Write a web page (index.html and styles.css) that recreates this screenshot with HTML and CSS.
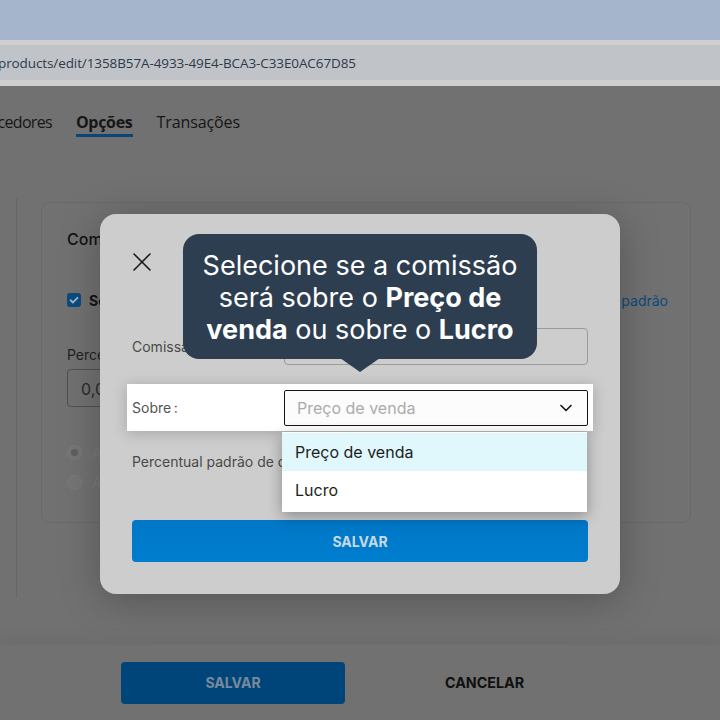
FILE: index.html
```html
<!DOCTYPE html>
<html lang="pt-BR">
<head>
<meta charset="utf-8">
<title>Opções</title>
<link rel="stylesheet" href="styles.css">
</head>
<body>
<div class="chrome-top"></div>
<div class="urlbar"><span class="url">products/edit/1358B57A-4933-49E4-BCA3-C33E0AC67D85</span></div>
<div class="page">
  <nav class="tabs">
    <span class="tab first">Fornecedores</span>
    <span class="tab active">Opções</span>
    <span class="tab">Transações</span>
  </nav>
  <div class="content">
    <div class="card">
      <div class="card-title">Comissão</div>
      <div class="check-row">
        <span class="checkbox"><svg viewBox="0 0 14 14" width="14" height="14"><path d="M3.5 7.2l2.3 2.3 4.7-4.7" fill="none" stroke="#9fb4c6" stroke-width="1.8" stroke-linecap="round" stroke-linejoin="round"/></svg></span>
        <span class="check-label">Sempre usar comissão</span>
        <span class="link">padrão</span>
      </div>
      <div class="field-label">Percentual</div>
      <div class="bg-input">0,00</div>
      <div class="radio-row first"><span class="radio checked"></span><span class="radio-label">A</span></div>
      <div class="radio-row"><span class="radio"></span><span class="radio-label">A</span></div>
    </div>
  </div>
  <footer class="footer">
    <button class="btn-footer-save">SALVAR</button>
    <button class="btn-footer-cancel">CANCELAR</button>
  </footer>

  <div class="modal">
    <svg class="close" viewBox="0 0 18 18" width="18" height="18"><path d="M1 1l16 16M17 1L1 17" stroke="#1a1a1a" stroke-width="1.6" stroke-linecap="round"/></svg>
    <div class="form-row row-commission">
      <span class="form-label">Comissão:</span>
      <div class="form-input"></div>
    </div>
    <div class="form-row row-highlight">
      <span class="form-label">Sobre&#8239;:</span>
      <div class="select">
        <span class="placeholder">Preço de venda</span>
        <svg class="chev" viewBox="0 0 14 14" width="14" height="14"><path d="M2 4.5l5 5 5-5" fill="none" stroke="#1a1a1a" stroke-width="1.7" stroke-linecap="round" stroke-linejoin="round"/></svg>
      </div>
      <ul class="menu">
        <li class="opt selected">Preço de venda</li>
        <li class="opt">Lucro</li>
      </ul>
    </div>
    <div class="form-row row-percent">
      <span class="form-label">Percentual padrão de comissão:</span>
      <div class="form-input"></div>
    </div>
    <button class="btn-save">SALVAR</button>
  </div>

  <div class="tooltip">
    Selecione se a comissão<br>será sobre o <b>Preço de</b><br><b>venda</b> ou sobre o <b>Lucro</b>
  </div>
</div>
</body>
</html>
```
FILE: styles.css
```css
* { box-sizing: border-box; }
html, body { margin: 0; padding: 0; }
body {
  width: 720px;
  height: 720px;
  overflow: hidden;
  background: #717171;
  font-family: "Open Sans", "Noto Sans", sans-serif;
}
.chrome-top { height: 40px; background: #a5b5cb; }
.urlbar {
  height: 46px;
  background: #c0c4c9;
  border-top: 5px solid #cfcfcf;
  border-bottom: 6px solid #cfcfcf;
  display: flex;
  align-items: center;
  overflow: hidden;
  white-space: nowrap;
}
.url {
  margin-left: -2px;
  font-family: "Open Sans", sans-serif;
  font-size: 13.5px;
  color: #2f3a48;
  letter-spacing: -0.1px;
}
.page {
  position: relative;
  height: 634px;
  background: #717171;
}
.tabs {
  display: flex;
  justify-content: flex-end;
  gap: 24px;
  padding-top: 25px;
  height: 71px;
  width: 240px;
  overflow: hidden;
}
.tab {
  flex: none;
  font-family: "Open Sans", sans-serif;
  font-size: 16px;
  color: #161616;
  height: 26px;
  line-height: 22px;
  letter-spacing: -0.1px;
}
.tab.first { letter-spacing: -0.7px; }
.tab.active {
  font-weight: 700;
  border-bottom: 3px solid #0b4679;
  letter-spacing: -0.3px;
}
.content {
  margin-left: 16px;
  border-left: 1px solid #666;
  height: 400px;
  padding: 4px 0 0 24px;
  margin-top: 41px;
}
.card {
  width: 650px;
  height: 321px;
  border: 1px solid #696969;
  border-radius: 8px;
  padding: 26px 0 0 25px;
}
.card-title {
  font-family: "Inter", sans-serif;
  font-size: 16px;
  font-weight: 500;
  color: #121212;
  height: 24px;
}
.check-row {
  display: flex;
  align-items: center;
  margin-top: 39px;
  height: 16px;
}
.checkbox {
  width: 14px; height: 14px;
  background: #0a4b80;
  border-radius: 3px;
  display: inline-flex;
}
.check-label {
  margin-left: 8px;
  font-family: "Inter", sans-serif;
  font-weight: 700;
  font-size: 14px;
  color: #111;
}
.link {
  margin-left: auto;
  margin-right: 22px;
  font-family: "Inter", sans-serif;
  font-size: 14px;
  color: #0b4a7f;
}
.field-label {
  margin-top: 38px;
  font-family: "Inter", sans-serif;
  font-size: 14px;
  color: #222;
  height: 20px;
}
.bg-input {
  width: 120px;
  height: 38px;
  border: 1px solid #505050;
  border-radius: 4px;
  margin-top: 3px;
  padding: 9px 0 0 13px;
  font-family: "Inter", sans-serif;
  font-size: 16px;
  color: #2a2a2a;
}
.radio-row { display: flex; align-items: center; height: 30px; }
.radio-row.first { margin-top: 30px; }
.radio {
  width: 15px; height: 15px;
  border-radius: 50%;
  border: 1px solid #7c7c7c;
  background: #757575;
  position: relative;
}
.radio.checked::after {
  content: "";
  position: absolute;
  left: 3px; top: 3px;
  width: 7px; height: 7px;
  border-radius: 50%;
  background: #5e5e5e;
}
.radio-label { margin-left: 10px; font-family: "Inter", sans-serif; font-size: 14px; color: #7a7a7a; }
.footer {
  position: absolute;
  left: 0; right: 0; bottom: 0;
  height: 75px;
  background: #717171;
  box-shadow: 0 -8px 14px rgba(0,0,0,0.04);
  display: flex;
  align-items: center;
  padding: 0 0 0 121px;
}
.btn-footer-save {
  width: 224px;
  height: 42px;
  border: none;
  border-radius: 4px;
  background: #00457a;
  color: #798a9a;
  font-family: "Inter", sans-serif;
  font-weight: 700;
  font-size: 14px;
}
.btn-footer-cancel {
  margin-left: 94px;
  padding: 0 6px;
  border: none;
  background: none;
  color: #101010;
  font-family: "Inter", sans-serif;
  font-weight: 700;
  font-size: 14.3px;
}
.modal {
  position: absolute;
  left: 100px;
  top: 128px;
  width: 520px;
  height: 380px;
  background: #cdcdcd;
  border-radius: 16px;
  box-shadow: 0 6px 40px rgba(0,0,0,0.25);
  padding: 39px 32px 32px 32px;
  display: flex;
  flex-direction: column;
  font-family: "Inter", sans-serif;
}
.close { margin-left: 1px; display: block; flex: none; }
.form-row {
  display: flex;
  align-items: center;
  position: relative;
}
.form-label {
  width: 152px;
  flex: none;
  font-size: 14px;
  color: #4a4a4a;
  white-space: nowrap;
  overflow: hidden;
}
.row-commission { margin-top: 57px; height: 37px; }
.form-input {
  flex: 1;
  height: 37px;
  border: 1px solid #9a9a9a;
  border-radius: 4px;
}
.row-highlight {
  margin: 19px -5px 0;
  padding: 0 5px;
  height: 47px;
  background: #fff;
  box-shadow: 0 2px 14px rgba(0,0,0,0.2);
}
.row-highlight .form-label { color: #555; }
.select {
  flex: 1;
  height: 36px;
  margin-top: 1px;
  border: 1px solid #141414;
  border-radius: 2px;
  background: #fcfcfc;
  display: flex;
  align-items: center;
  padding: 0 14px 0 12px;
}
.placeholder { font-size: 16px; color: #ababab; flex: 1; }
.chev { flex: none; }
.menu {
  position: absolute;
  left: 155px;
  top: 48px;
  width: 305px;
  margin: 0;
  padding: 1px 0 3px;
  list-style: none;
  background: #fff;
  box-shadow: 0 4px 14px rgba(0,0,0,0.32);
  z-index: 2;
}
.opt {
  height: 38px;
  line-height: 38px;
  padding-left: 13px;
  font-size: 16px;
  color: #1e1e1e;
}
.opt.selected { background: #e0f7fc; }
.row-percent { margin-top: 12px; height: 36px; }
.row-percent .form-input { visibility: hidden; }
.btn-save {
  margin-top: 41px;
  height: 42px;
  flex: none;
  border: none;
  border-radius: 4px;
  background: linear-gradient(#0077c6, #007dcf);
  color: #c8d9e6;
  font-family: "Inter", sans-serif;
  font-weight: 700;
  font-size: 14px;
}
.tooltip {
  position: absolute;
  left: 183px;
  top: 148px;
  width: 354px;
  height: 125px;
  background: #2d3e50;
  border-radius: 16px;
  color: #fff;
  font-family: "Inter", sans-serif;
  font-size: 27px;
  line-height: 32px;
  text-align: center;
  padding-top: 16px;
  z-index: 3;
}
.tooltip b { font-weight: 700; }
.tooltip::after {
  content: "";
  position: absolute;
  left: 157px;
  top: 124px;
  border-left: 20px solid transparent;
  border-right: 20px solid transparent;
  border-top: 14px solid #2d3e50;
}
```
